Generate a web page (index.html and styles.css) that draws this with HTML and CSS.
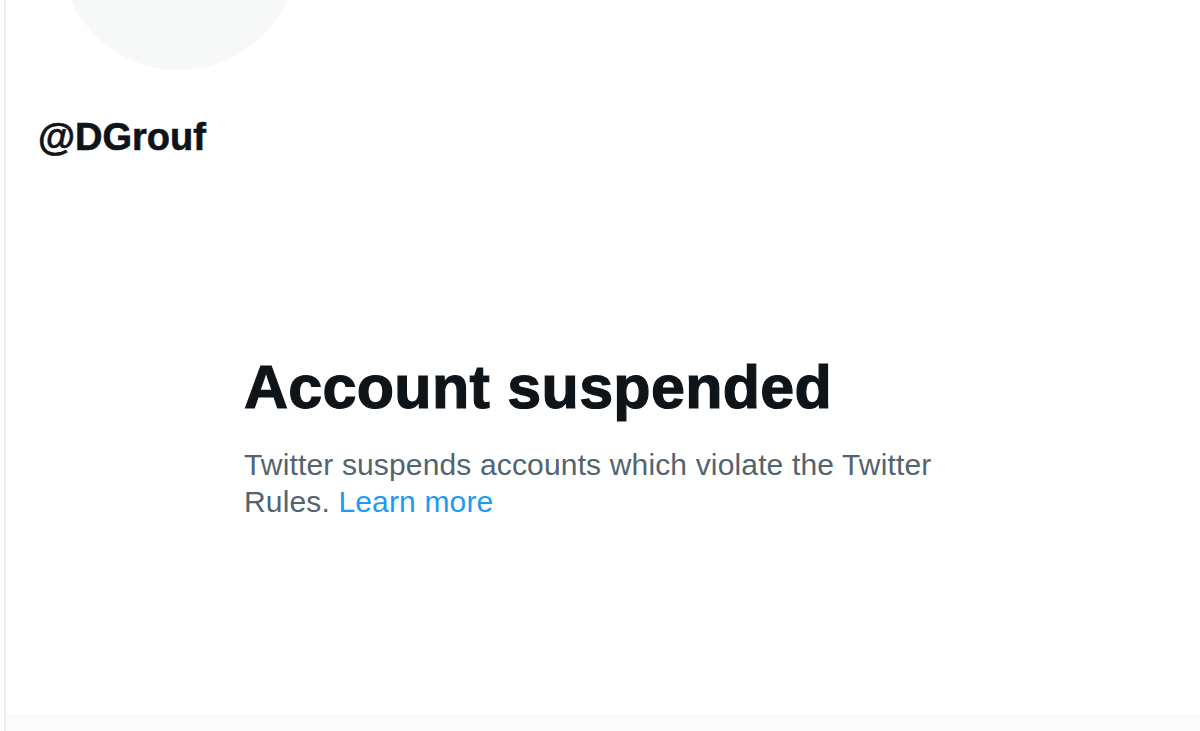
FILE: index.html
```html
<!DOCTYPE html>
<html lang="en">
<head>
<meta charset="utf-8">
<title>@DGrouf / Twitter</title>
<link rel="stylesheet" href="styles.css">
</head>
<body>
<div class="page">
  <main class="profile">
    <div class="avatar"></div>
    <h2 class="handle">@DGrouf</h2>
    <section class="notice">
      <h1 class="notice-title">Account suspended</h1>
      <p class="notice-text"><span>Twitter suspends accounts which violate the Twitter</span> <span>Rules.</span> <a class="link" href="#">Learn more</a></p>
    </section>
    <div class="footer-strip"></div>
  </main>
</div>
</body>
</html>
```
FILE: styles.css
```css
html, body {
  margin: 0;
  padding: 0;
  background: #ffffff;
  overflow: hidden;
}
body {
  font-family: "Liberation Sans", Arial, sans-serif;
}
.page {
  display: flex;
  height: 731px;
  padding-left: 4px;
}
.profile {
  flex: 1;
  display: flex;
  flex-direction: column;
  border-left: 2px solid #eceff1;
  overflow: hidden;
}
.avatar {
  width: 238px;
  height: 238px;
  margin-top: -168px;
  margin-left: 54px;
  border-radius: 50%;
  background: #f7f9f9;
  flex: none;
}
.handle {
  margin: 44px 0 0 32px;
  font-size: 38px;
  line-height: 46px;
  font-weight: 700;
  color: #0f1419;
  -webkit-text-stroke: 0.6px #0f1419;
}
.notice {
  margin: 191px 0 0 238px;
  width: 700px;
}
.notice-title {
  margin: 0;
  font-size: 61px;
  line-height: 72px;
  font-weight: 700;
  color: #0f1419;
  letter-spacing: 0.3px;
  -webkit-text-stroke: 1.2px #0f1419;
}
.notice-text {
  margin: 23px 0 0;
  font-size: 30px;
  line-height: 37px;
  color: #536471;
  letter-spacing: 0.15px;
}
.link {
  color: #1d9bf0;
  text-decoration: none;
}
.footer-strip {
  margin-top: auto;
  height: 17px;
  background: #fbfbfb;
}
```
